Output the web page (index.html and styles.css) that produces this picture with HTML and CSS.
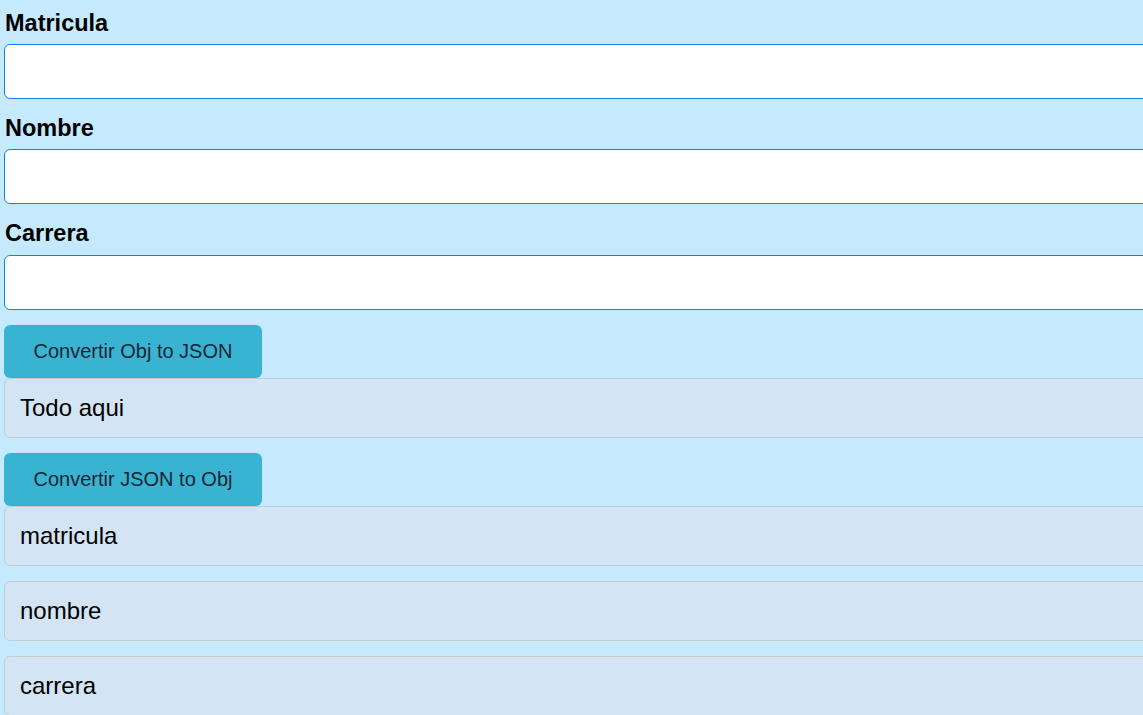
FILE: index.html
```html
<!DOCTYPE html>
<html lang="es">
<head>
<meta charset="utf-8">
<title>Formulario</title>
<link rel="stylesheet" href="styles.css">
</head>
<body>
<main class="page">
  <label class="label" for="matricula">Matricula</label>
  <input class="field" id="matricula" type="text">
  <label class="label" for="nombre">Nombre</label>
  <input class="field" id="nombre" type="text">
  <label class="label" for="carrera">Carrera</label>
  <input class="field field-last" id="carrera" type="text">
  <button class="btn" type="button">Convertir Obj to JSON</button>
  <div class="out">Todo aqui</div>
  <button class="btn" type="button">Convertir JSON to Obj</button>
  <div class="out">matricula</div>
  <div class="out">nombre</div>
  <div class="out">carrera</div>
</main>
</body>
</html>
```
FILE: styles.css
```css
html, body {
  margin: 0;
  padding: 0;
  overflow: hidden;
  background: #c5e9fd;
}
.page {
  display: flex;
  flex-direction: column;
  align-items: flex-start;
  padding: 8px 0 0 4px;
  width: 1160px;
  font-family: "Liberation Sans", Arial, sans-serif;
}
.label {
  font-weight: bold;
  font-size: 23.5px;
  line-height: 27px;
  color: #000;
  padding: 2px 0 0 1px;
  margin-bottom: 7px;
}
.field {
  box-sizing: border-box;
  width: 100%;
  height: 55px;
  border: 1px solid #1a7fe0;
  border-radius: 6px;
  background: #fff;
  margin: 0 0 14px 0;
  font-size: 20px;
  font-family: inherit;
}
.field-last {
  margin-top: 1px;
}
.btn {
  box-sizing: border-box;
  width: 258px;
  height: 53px;
  margin: 1px 0 0 0;
  padding: 0;
  border: none;
  border-radius: 6px;
  background: #38b4d2;
  color: #152434;
  font-family: inherit;
  font-size: 20px;
}
.out {
  box-sizing: border-box;
  width: 100%;
  height: 60px;
  padding: 0 15px;
  display: flex;
  align-items: center;
  border: 1px solid #c8cacc;
  border-radius: 6px;
  background: #d3e5f4;
  color: #000;
  font-size: 24px;
  margin-bottom: 15px;
}
.out + .btn {
  margin-top: 0;
}
```
